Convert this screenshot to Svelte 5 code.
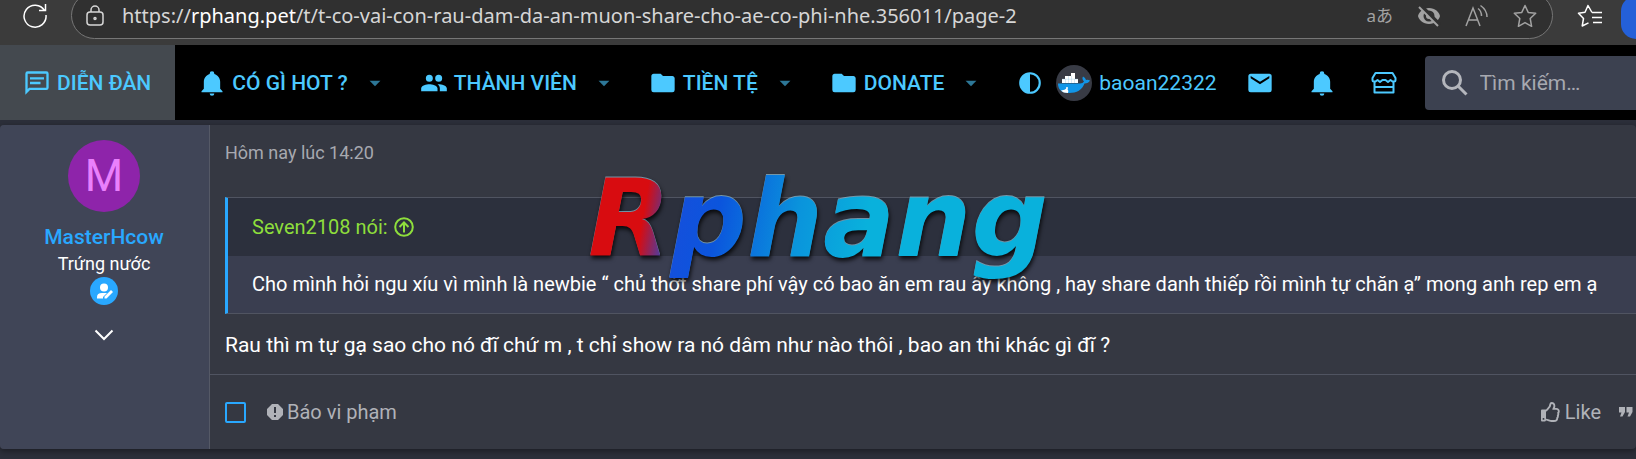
<script lang="ts">
	const icons = {
		bell: 'M21,19V20H3V19L5,17V11C5,7.9 7.03,5.17 10,4.29V4A2,2 0 0,1 14,4V4.29C16.97,5.17 19,7.9 19,11V17L21,19M14,21A2,2 0 0,1 10,21',
		forum: 'M20,2A2,2 0 0,1 22,4V16A2,2 0 0,1 20,18H6L2,22V4A2,2 0 0,1 4,2H20M4,4V17.17L5.17,16H20V4H4M6,7H18V9H6V7M6,11H15V13H6V11Z',
		users: 'M16,13C15.71,13 15.38,13 15.03,13.05C16.19,13.89 17,15 17,16.5V19H23V16.5C23,14.17 18.33,13 16,13M8,13C5.67,13 1,14.17 1,16.5V19H15V16.5C15,14.17 10.33,13 8,13M8,11A3,3 0 0,0 11,8A3,3 0 0,0 8,5A3,3 0 0,0 5,8A3,3 0 0,0 8,11M16,11A3,3 0 0,0 19,8A3,3 0 0,0 16,5A3,3 0 0,0 13,8A3,3 0 0,0 16,11Z',
		folder: 'M10,4H4C2.89,4 2,4.89 2,6V18A2,2 0 0,0 4,20H20A2,2 0 0,0 22,18V8C22,6.89 21.1,6 20,6H12L10,4Z',
		mail: 'M20,8L12,13L4,8V6L12,11L20,6M20,4H4C2.89,4 2,4.89 2,6V18A2,2 0 0,0 4,20H20A2,2 0 0,0 22,18V6C22,4.89 21.1,4 20,4Z'
	};

	const menu = [
		{ label: 'CÓ GÌ HOT ?', icon: icons.bell },
		{ label: 'THÀNH VIÊN', icon: icons.users },
		{ label: 'TIỀN TỆ', icon: icons.folder },
		{ label: 'DONATE', icon: icons.folder }
	];

	let search = $state('');
	let picked = $state(false);
</script>

{#snippet icon(path: string)}
	<svg class="icon" viewBox="0 0 24 24" aria-hidden="true"><path d={path} /></svg>
{/snippet}

<div class="page">
	<div class="browser">
		<button class="tool reload" aria-label="Refresh">
			<svg viewBox="0 0 26 26" class="line">
				<path d="M22.5 8.5A11 11 0 1 0 24 13M23.500 2V8.500H17" />
			</svg>
		</button>
		<div class="address">
			<svg viewBox="0 0 20 22" class="lock line">
				<rect x="2" y="7" width="16" height="13" rx="3" />
				<path d="M6 7V5a4 4 0 0 1 8 0v2" />
				<circle cx="10" cy="13.500" r="1" />
			</svg>
			<span class="url">https://<b>rphang.pet</b>/t/t-co-vai-con-rau-dam-da-an-muon-share-cho-ae-co-phi-nhe.356011/page-2</span>
			<div class="tools">
				<button class="tool translate" aria-label="Translate">aあ</button>
				<button class="tool" aria-label="Tracking">
					<svg viewBox="0 0 24 24">
						<path fill="#a2a2a2" d="M12 4C6 4 2 8 1 12c1 4 5 8 11 8s10-4 11-8c-1-4-5-8-11-8z" />
						<circle cx="12" cy="12" r="5.500" fill="#303030" />
						<circle cx="12" cy="12" r="3" fill="#a2a2a2" />
						<path d="M3 1L23 21" stroke="#303030" stroke-width="4" />
						<path d="M2 3L21 22" stroke="#a2a2a2" stroke-width="2" />
					</svg>
				</button>
				<button class="tool" aria-label="Read aloud">
					<svg viewBox="0 0 24 24" class="line">
						<path d="M1 22L8 4L15 22M3.500 16H12.500M13 4.500Q16.500 7 16.500 12M15.500 1.500Q22 6 22 13" />
					</svg>
				</button>
				<button class="tool" aria-label="Favorite">
					<svg viewBox="0 0 24 24" class="line">
						<path d="M12 1.500L15.200 8.400L22.700 9.300L17.200 14.500L18.600 22.300L12 18.600L5.400 22.300L6.800 14.500L1.300 9.300L8.800 8.400Z" stroke-linejoin="round" />
					</svg>
				</button>
			</div>
		</div>
		<button class="tool favorites" aria-label="Favorites">
			<svg viewBox="0 0 26 24" class="line">
				<path d="M15 8.500L11 1.500L8 8.200L1.500 9.300L6.500 14.500L5.200 22L11.500 18.800M15 8.500H25M15 13.500H25M16 18.500H25" stroke-linejoin="round" />
			</svg>
		</button>
		<span class="profile"></span>
	</div>

	<nav>
		<a class="item active" href="#forum">{@render icon(icons.forum)}DIỄN ĐÀN</a>
		{#each menu as entry}
			<a class="item" href="#menu">
				{@render icon(entry.icon)}{entry.label}
				<svg class="caret" viewBox="0 0 24 24"><path d="M7,10L12,15L17,10H7Z" /></svg>
			</a>
		{/each}
		<button class="mode" aria-label="Theme">
			<svg viewBox="0 0 24 24">
				<path d="M12 2A10 10 0 0 0 2 12A10 10 0 0 0 12 22A10 10 0 0 0 22 12A10 10 0 0 0 12 2M12 4A8 8 0 0 1 20 12A8 8 0 0 1 12 20V4Z" />
			</svg>
		</button>
		<a class="account" href="#account">
			<svg class="whale" viewBox="0 0 36 36">
				<circle cx="18" cy="18" r="18" fill="#383b45" />
				<path fill="#1296e8" d="M2 18.500H24Q27 18.500 28 16.500Q25.500 14 27 11.500Q29.500 12.500 30 15Q32 14.500 34 15.500Q32.500 18.500 28.500 18.500C26 25 21 28 13 28C5 28 2 24 2 18.500Z" />
				<path fill="#fff" d="M15 8h4v3h-4zM9 11h10v3H9zM6 14h16v4H6zM5 25.500Q9 25 11 23Q13 26 12 28Q7 28 5 25.500Z" />
				<path d="M9.500 14V18M12.500 11V18M15.500 11V18M18.500 14V18M6 14.200H22" stroke="#9cc9e7" stroke-width=".4" />
				<circle cx="11" cy="23" r="1" fill="#fff" />
			</svg>
			baoan22322
		</a>
		<a class="short" href="#mail" aria-label="Mail">{@render icon(icons.mail)}</a>
		<a class="short" href="#alerts" aria-label="Alerts">{@render icon(icons.bell)}</a>
		<a class="short" href="#store" aria-label="Store">
			<svg class="icon store" viewBox="0 0 28 28">
				<path d="M5.500 4H22.500L25.500 9V11Q25.500 12.500 24 12.500H22.500L20.500 11L18 13L15.500 11H12.500L10 13L7.500 11L5.500 12.500H4Q2.500 12.500 2.500 11V9ZM4.500 13V23.500H23.500V13M5 18H23" stroke-linejoin="round" />
			</svg>
		</a>
		<label class="search">
			<svg viewBox="0 0 26 26"><circle cx="10" cy="10" r="8.500" /><path d="M16 16L24.500 24.500" /></svg>
			<input type="text" placeholder="Tìm kiếm…" aria-label="Tìm kiếm" bind:value={search} />
		</label>
	</nav>

	<article>
		<aside>
			<div class="avatar">M</div>
			<a class="name" href="#user">MasterHcow</a>
			<div class="rank">Trứng nước</div>
			<span class="badge">
				<svg viewBox="0 0 28 28">
					<circle cx="14" cy="10.500" r="4" />
					<path d="M7 21.500V20Q7 16 12 16H17L13 20V21.500ZM14.500 19.500L21 13L23 15L16.500 21.500H14.500Z" />
				</svg>
			</span>
			<button class="more" aria-label="More">
				<svg viewBox="0 0 20 12"><path d="M1.500 1.500L10 10L18.500 1.500" /></svg>
			</button>
		</aside>
		<section>
			<div class="content">
				<time>Hôm nay lúc 14:20</time>
				<blockquote>
					<a class="source" href="#source">
						Seven2108 nói:
						<svg viewBox="0 0 20 20">
							<circle cx="10" cy="10" r="8.800" />
							<path d="M10 15.500V5.500M5.500 10L10 5.500L14.500 10" />
						</svg>
					</a>
					<p>Cho mình hỏi ngu xíu vì mình là newbie “ chủ thớt share phí vậy có bao ăn em rau ấy không , hay share danh thiếp rồi mình tự chăn ạ” mong anh rep em ạ</p>
				</blockquote>
				<p class="reply">Rau thì m tự gạ sao cho nó đĩ chứ m , t chỉ show ra nó dâm như nào thôi , bao an thi khác gì đĩ ?</p>
			</div>
			<footer>
				<input type="checkbox" aria-label="Chọn bài viết" bind:checked={picked} />
				<button class="action report">
					<svg viewBox="0 0 16 16" fill-rule="evenodd">
						<path d="M5 0H11L16 5V11L11 16H5L0 11V5ZM7 3V9H9V3ZM7 11V13H9V11Z" />
					</svg>
					Báo vi phạm
				</button>
				<button class="action like">
					<svg viewBox="0 0 512 512">
						<path d="M466.27 286.69C475.04 271.84 480 256 480 236.85c0-44.015-37.218-85.58-85.82-85.58H357.7c4.92-12.81 8.85-28.13 8.85-46.54C366.55 31.936 328.86 0 271.28 0c-61.607 0-58.093 94.933-71.76 108.6-22.747 22.747-49.615 66.447-68.76 83.4H32c-17.673 0-32 14.327-32 32v240c0 17.673 14.327 32 32 32h64c14.893 0 27.408-10.174 30.978-23.95 44.509 1.001 75.06 39.94 177.802 39.94 7.22 0 15.22.01 22.22.01 77.117 0 111.986-39.423 112.94-95.33 13.319-18.425 20.299-43.122 17.34-66.99 9.854-18.452 13.664-40.343 8.99-62.99zm-61.75 53.83c12.56 21.13 1.26 49.41-13.94 57.57 7.7 48.78-17.608 65.9-53.12 65.9h-37.82c-71.639 0-118.029-37.82-171.64-37.82V240h10.92c28.36 0 67.98-70.89 94.54-97.46 28.36-28.36 18.91-75.63 37.82-94.54 47.27 0 47.27 32.98 47.27 56.73 0 39.17-28.36 56.72-28.36 94.54h103.99c21.11 0 37.73 18.91 37.82 37.82.09 18.9-12.82 37.81-22.27 37.81 13.489 14.555 16.371 45.236-5.21 65.62zM88 432c0 13.255-10.745 24-24 24s-24-10.745-24-24 10.745-24 24-24 24 10.745 24 24z" />
					</svg>
					Like
				</button>
				<button class="action quote" aria-label="Quote">
					<svg viewBox="0 0 14 10"><path d="M0 0H6V5L3.500 9.500H1L2.500 5.500H0ZM7.500 0H13.500V5L11 9.500H8.500L10 5.500H7.500Z" /></svg>
				</button>
			</footer>
		</section>
	</article>

	<div class="watermark"><span>Rphang</span></div>
</div>

<style>
	:global(body) {
		background: #2c2f3a;
		overflow-x: hidden;
	}

	.page {
		position: relative;
		overflow: hidden;
		padding-bottom: 10px;
		font-family: Roboto, "Noto Sans", sans-serif;
		font-size: 21px;
		line-height: 28px;
		color: #fff;
	}

	button {
		padding: 0;
		border: none;
		background: none;
		color: inherit;
		font: inherit;
		display: flex;
		align-items: center;
	}

	a {
		color: inherit;
		text-decoration: none;
	}

	svg {
		display: block;
		flex: none;
	}

	.line {
		fill: none;
		stroke: currentColor;
		stroke-width: 1.5;
	}

	.browser {
		display: flex;
		align-items: flex-end;
		height: 39px;
		padding-bottom: 6px;
		background: #3b3b3b;
		overflow: hidden;
	}

	.tool svg {
		width: 24px;
		height: 24px;
	}

	.reload {
		margin: 0 23px 11px 22px;
	}

	.reload svg {
		width: 26px;
		height: 26px;
	}

	.address {
		flex: 1;
		display: flex;
		align-items: center;
		height: 47px;
		box-sizing: border-box;
		padding: 0 15px 0 13px;
		border: 1px solid #767676;
		border-radius: 24px;
		background: #303030;
		color: #d6d6d6;
	}

	.lock {
		width: 20px;
		height: 22px;
		margin-right: 17px;
	}

	.url {
		flex: 1;
		font-family: "Noto Sans", sans-serif;
		font-size: 20px;
	}

	.url b {
		font-weight: 400;
		color: #fff;
	}

	.tools {
		display: flex;
		gap: 24px;
		color: #a2a2a2;
	}

	.translate {
		font-family: "Noto Sans", "Noto Sans CJK JP", sans-serif;
		font-size: 17px;
	}

	.favorites {
		margin: 0 18px 11px 24px;
	}

	.favorites svg {
		width: 26px;
	}

	.profile {
		width: 15px;
		height: 43px;
		border-radius: 20px 0 0 20px;
		background: #2460d8;
	}

	nav {
		display: flex;
		align-items: center;
		height: 75px;
		background: #000;
		color: #4cc9ff;
		white-space: nowrap;
	}

	.icon {
		width: 28px;
		height: 28px;
		fill: currentColor;
	}

	.item {
		display: flex;
		align-items: center;
		gap: 6px;
		height: 100%;
		padding: 0 9px 0 23px;
		font-weight: 500;
	}

	.item.active {
		padding-right: 24px;
		background: #44494f;
	}

	.caret {
		width: 26px;
		height: 26px;
		margin-left: 8px;
		fill: #2d7797;
	}

	.mode {
		margin: 0 13px 0 24px;
	}

	.mode svg {
		width: 26px;
		height: 26px;
		fill: currentColor;
	}

	.account {
		display: flex;
		align-items: center;
		gap: 7px;
		margin-right: 12px;
	}

	.whale {
		width: 36px;
		height: 36px;
	}

	.short {
		padding: 0 17px;
	}

	.icon.store {
		fill: none;
		stroke: currentColor;
		stroke-width: 2;
	}

	.search {
		flex: 1;
		display: flex;
		align-items: center;
		gap: 12px;
		min-width: 0;
		height: 54px;
		margin-left: 10px;
		padding-left: 17px;
		border-radius: 4px 0 0 4px;
		background: #3c4150;
	}

	.search svg {
		width: 26px;
		height: 26px;
		fill: none;
		stroke: #b4b6bc;
		stroke-width: 3;
	}

	.search input {
		flex: 1;
		min-width: 0;
		padding: 0;
		border: none;
		background: none;
		color: #fff;
		font: inherit;
	}

	.search input::placeholder {
		color: #a7a9b0;
		opacity: 1;
	}

	article {
		display: flex;
		margin-top: 5px;
		border-radius: 4px;
		background: #353842;
		box-shadow: 0 2px 6px rgba(0, 0, 0, 0.4);
	}

	aside {
		display: flex;
		flex-direction: column;
		align-items: center;
		width: 209px;
		box-sizing: border-box;
		padding: 15px 1px 0 0;
		border-radius: 4px 0 0 4px;
		background: #404557;
	}

	.avatar {
		width: 72px;
		margin-bottom: 11px;
		border-radius: 50%;
		background: #8e24aa;
		color: #ea80fc;
		font-size: 44px;
		line-height: 72px;
		text-align: center;
	}

	.name {
		color: #29a8ff;
		font-weight: 500;
	}

	.rank {
		font-size: 18px;
		line-height: 26px;
	}

	.badge {
		border-radius: 50%;
		background: #29a8ff;
	}

	.badge svg {
		width: 28px;
		height: 28px;
		fill: #fff;
	}

	.more {
		margin-top: 24px;
	}

	.more svg {
		width: 20px;
		height: 12px;
		fill: none;
		stroke: #fff;
		stroke-width: 2;
	}

	section {
		flex: 1;
		min-width: 0;
		border-left: 1px solid #555966;
	}

	.content {
		padding: 15px 0 15px 15px;
	}

	time {
		display: block;
		color: #a7a9b0;
		font-size: 18px;
		line-height: 25px;
	}

	blockquote {
		margin: 32px 0 17px;
		border: 1px solid #505461;
		border-left: 3px solid #29a8ff;
		border-right: none;
		background: #3a3e50;
		font-size: 20px;
	}

	.source {
		display: flex;
		align-items: center;
		gap: 6px;
		padding: 15px 24px;
		background: #2c303d;
		color: #8ede3c;
	}

	.source svg {
		width: 20px;
		height: 20px;
		fill: none;
		stroke: currentColor;
		stroke-width: 2;
	}

	p {
		margin: 0;
	}

	blockquote p {
		padding: 14px 24px 15px;
	}

	footer {
		display: flex;
		align-items: center;
		height: 74px;
		padding: 0 3px 0 15px;
		border-top: 1px solid #505461;
		color: #b0b2b8;
		font-size: 20px;
	}

	footer input {
		appearance: none;
		width: 21px;
		height: 21px;
		margin: 0 21px 0 0;
		border: 2px solid #29a8ff;
		border-radius: 2px;
	}

	footer input:checked {
		background: #29a8ff;
	}

	.action {
		gap: 4px;
	}

	.action svg {
		height: 16px;
		fill: currentColor;
	}

	.like {
		margin-left: auto;
	}

	.action.like svg {
		width: 20px;
		height: 20px;
	}

	.quote {
		margin-left: 18px;
	}

	.action.quote svg {
		width: 14px;
		height: 10px;
	}

	/* site logo laid over the whole page */
	.watermark {
		position: absolute;
		inset: 0;
		display: grid;
		place-items: center;
		padding-bottom: 22px;
		pointer-events: none;
	}

	.watermark span {
		padding: 0 10px;
		background: linear-gradient(100deg, #d80c10 15%, #1450dc 22%, #0b55dd 30%, #0a94dc 46%, #09b1dc 60%);
		background-clip: text;
		color: transparent;
		font: italic 700 107px/124px "DejaVu Sans", sans-serif;
		filter: drop-shadow(0 -1px 0 rgba(160, 215, 240, 0.6)) drop-shadow(1px 3px 2px rgba(0, 0, 0, 0.8));
	}
</style>
